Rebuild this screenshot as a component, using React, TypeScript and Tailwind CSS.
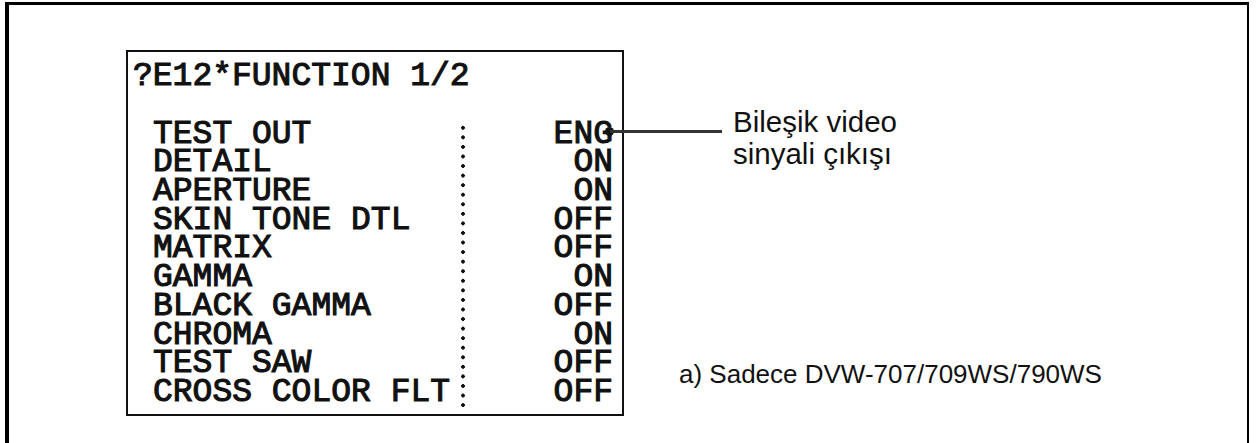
import React from "react";

const rows: [string, string][] = [
  ["TEST OUT", "ENG"],
  ["DETAIL", "ON"],
  ["APERTURE", "ON"],
  ["SKIN TONE DTL", "OFF"],
  ["MATRIX", "OFF"],
  ["GAMMA", "ON"],
  ["BLACK GAMMA", "OFF"],
  ["CHROMA", "ON"],
  ["TEST SAW", "OFF"],
  ["CROSS COLOR FLT", "OFF"],
];

const mono = { fontFamily: '"Liberation Mono", "DejaVu Sans Mono", monospace' };
const sans = { fontFamily: '"Liberation Sans", Arial, sans-serif' };

export default function App() {
  return (
    <div className="relative w-[1257px] h-[443px] overflow-hidden bg-white">
      <div className="ml-[5px] mt-[2px] w-[1244px] h-[460px] border-l-[4px] border-t-[3px] border-r-[2px] border-black pl-[117px] pt-[45px] flex items-start">
        <div className="w-[498px] h-[366px] border-2 border-[#111] text-[#111] font-normal text-[33px] leading-[28.7px] [-webkit-text-stroke:1.1px_#111]" style={mono}>
          <div className="pl-[5px] pt-[10.6px] whitespace-pre">?E12*FUNCTION 1/2</div>
          <div className="mt-[29.3px] flex">
            <div className="w-[332px] pl-[25px] whitespace-pre">
              {rows.map(([l]) => (
                <div key={l}>{l}</div>
              ))}
            </div>
            <div className="w-[6px] h-[287px] bg-[radial-gradient(circle,#111_1.6px,transparent_2.1px)] bg-[length:6px_9.567px] bg-[position:0_2px]" />
            <div className="flex-1 pr-[9px] text-right">
              {rows.map(([l, v]) => (
                <div key={l}>{v}</div>
              ))}
            </div>
          </div>
        </div>
        <div className="flex-1 h-[366px] flex flex-col text-[#111]" style={sans}>
          <div className="mt-[56px] pl-[109px] text-[29.5px] leading-[32px]">
            <div>Bileşik video</div>
            <div>sinyali çıkışı</div>
          </div>
          <div className="mt-auto mb-[27px] pl-[55px] text-[26px] leading-[30px]">
            a) Sadece DVW-707/709WS/790WS
          </div>
        </div>
      </div>
      <div className="absolute left-[605px] top-[127px] w-[9px] h-[9px] rounded-full bg-[#111]" />
      <div className="absolute left-[610px] top-[130px] w-[112px] h-[3px] bg-[#333]" />
    </div>
  );
}
